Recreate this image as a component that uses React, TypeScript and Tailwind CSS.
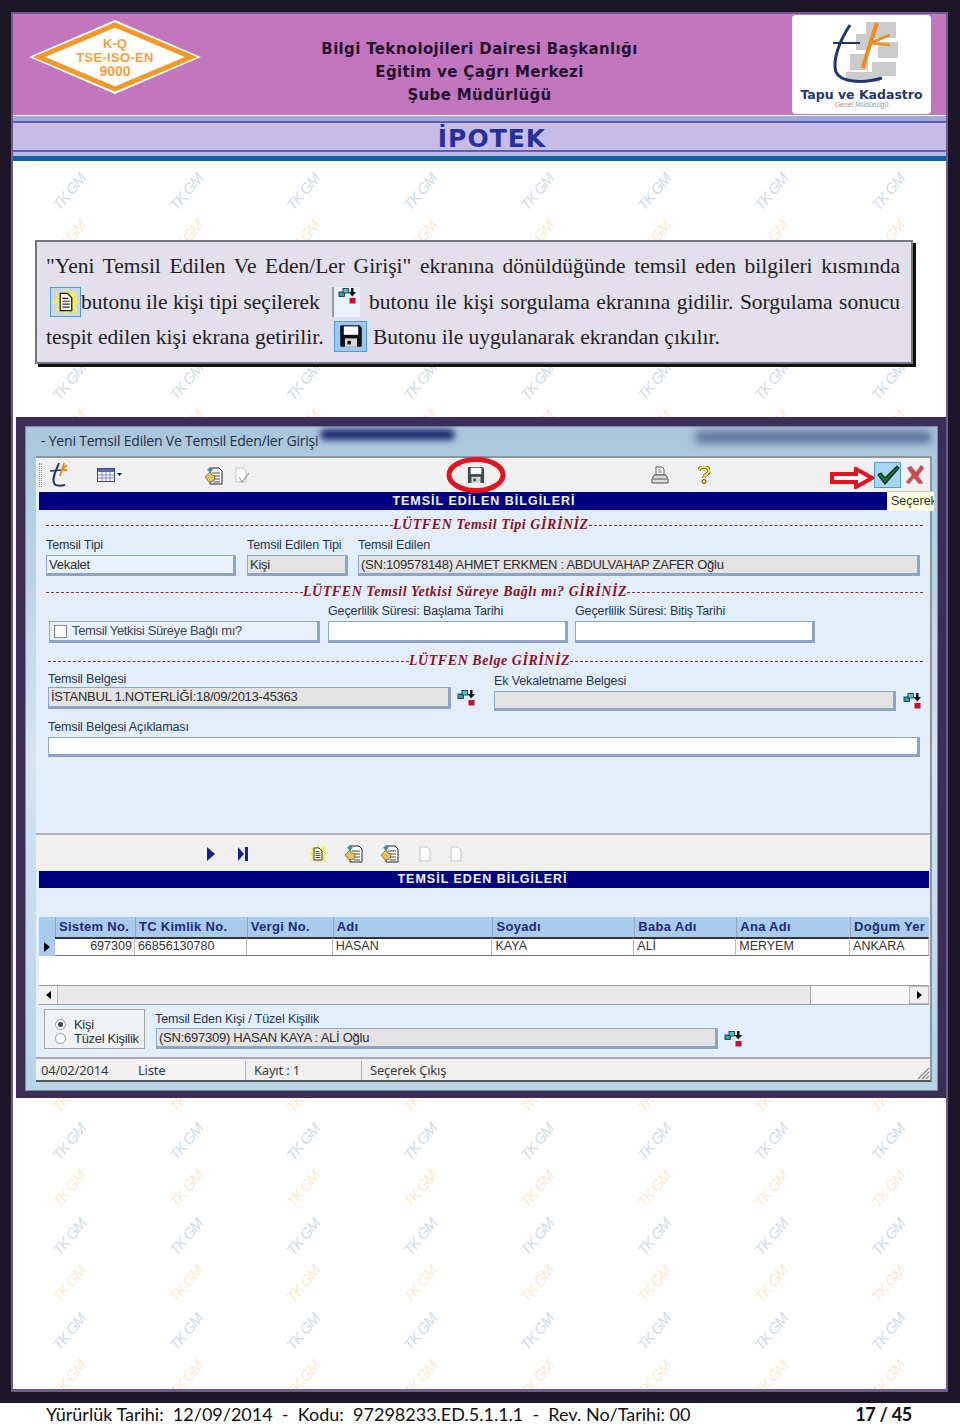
const rows = Array.from({ length: 14 }, (_, i) => i);
const cols = Array.from({ length: 8 }, (_, i) => i);

// box and screenshot cover these page rows, no point drawing marks under them
const hidden = (y: number) => y > 1385 || y < 165 || (y > 262 && y < 345) || (y > 440 && y < 1075);

function Watermarks() {
  return (
    <div className="absolute inset-0 overflow-hidden">
      {rows.map((r) =>
        cols.map((c) => (
          <div key={`${r}-${c}`}>
            {!hidden(192 + r * 95) && 192 + r * 95 < 1345 && (
              <span
                className="absolute -rotate-[50deg] font-['Liberation_Sans',sans-serif] text-[15px] leading-[16px] tracking-[-1px] italic whitespace-nowrap text-[#d0dae8]"
                style={{ left: 35 + c * 117, top: 170 + r * 95 }}
              >
                TK GM
              </span>
            )}
            {!hidden(140 + r * 95) && (
              <span
                className="absolute -rotate-[50deg] font-['Liberation_Sans',sans-serif] text-[15px] leading-[16px] tracking-[-1px] italic whitespace-nowrap text-[#fbeacf]"
                style={{ left: 35 + c * 117, top: 122 + r * 95 }}
              >
                TK GM
              </span>
            )}
          </div>
        ))
      )}
    </div>
  );
}

function DiamondLogo() {
  return (
    <svg width="174" height="76" viewBox="0 0 174 76" className="ml-[15px] mt-[5px]">
      <polygon points="87,1 173,38 87,75 1,38" fill="#fff" />
      <polygon points="87,6 163,38 87,70 11,38" fill="#fff" stroke="#f39a26" strokeWidth="5" />
      <g fill="#f5a13a" fontFamily="'Liberation Sans',sans-serif" fontWeight="700" textAnchor="middle">
        <text x="87" y="29" fontSize="13">K-Q</text>
        <text x="87" y="43" fontSize="13" letterSpacing="0.3">TSE-ISO-EN</text>
        <text x="87" y="57" fontSize="14">9000</text>
      </g>
    </svg>
  );
}

function TapuLogo() {
  return (
    <div className="ml-auto mr-[15px] mt-px flex h-[99px] w-[139px] flex-col items-center rounded-sm bg-white">
      <svg width="80" height="72" viewBox="0 0 80 72" className="mt-[5px]">
        <g fill="#cbcbcb">
          <rect x="44" y="2" width="30" height="16" />
          <rect x="34" y="14" width="14" height="16" />
          <rect x="56" y="22" width="20" height="16" />
          <rect x="28" y="34" width="18" height="16" />
          <rect x="50" y="42" width="24" height="14" />
          <rect x="24" y="52" width="34" height="10" />
        </g>
        <path d="M28 5 C18 20 10 40 14 52 C18 62 40 64 60 58" fill="none" stroke="#20366f" strokeWidth="3" />
        <path d="M11 23 L38 23" stroke="#20366f" strokeWidth="2" />
        <path d="M55 3 C50 18 44 36 41 48" fill="none" stroke="#ef8a1d" strokeWidth="4" />
        <path d="M48 23 L68 15 M48 23 L68 25" fill="none" stroke="#ef8a1d" strokeWidth="2.5" />
      </svg>
      <div className="mt-[-3px] font-['DejaVu_Sans',sans-serif] text-[12.5px] leading-[12px] font-bold whitespace-nowrap text-[#21386e]">
        Tapu ve Kadastro
      </div>
      <div className="font-['Liberation_Sans',sans-serif] text-[7px] leading-[7px] text-[#9a9a9a]">Genel Müdürlüğü</div>
    </div>
  );
}

function PickIcon({ className = "" }: { className?: string }) {
  return (
    <svg width="19" height="18" viewBox="0 0 19 18" className={className}>
      <rect x="1" y="5" width="5.500" height="4.500" fill="#2aa8a8" stroke="#123" strokeWidth="0.800" />
      <rect x="5" y="1.500" width="5.500" height="4.500" fill="#4fc3d0" stroke="#123" strokeWidth="0.800" />
      <path d="M13 1h2.500v4H18l-3.700 4.500L10.500 5H13z" fill="#111" />
      <rect x="11.500" y="11" width="6" height="5.500" fill="#c8102e" />
    </svg>
  );
}

function FloppyIcon({ className = "" }: { className?: string }) {
  return (
    <svg width="20" height="20" viewBox="0 0 20 20" className={className}>
      <path d="M2 1h15l2 2v15a1 1 0 0 1-1 1H2a1 1 0 0 1-1-1V2a1 1 0 0 1 1-1z" fill="currentColor" />
      <rect x="4" y="2" width="12" height="7" fill="#fff" />
      <rect x="5" y="12" width="10" height="7" fill="#d6d6d6" />
      <rect x="7" y="14" width="3" height="3" fill="currentColor" />
    </svg>
  );
}

function SparkDocIcon({ className = "" }: { className?: string }) {
  return (
    <svg width="18" height="18" viewBox="0 0 18 18" className={className}>
      <polygon points="9,0 11,3 16,1 15,6 18,9 15,11 17,17 11,15 9,18 7,15 2,16 3,11 0,9 3,6 2,2 7,3" fill="#f7ee4a" />
      <path d="M5 3h5l3 3v9H5z" fill="#fff" stroke="#222" strokeWidth="0.900" />
      <path d="M6.500 6.500h4M6.500 8.500h5M6.500 10.500h5M6.500 12.500h5" stroke="#222" strokeWidth="0.800" />
    </svg>
  );
}

function DocIcon({ check = false, className = "" }: { check?: boolean; className?: string }) {
  return (
    <svg width="18" height="18" viewBox="0 0 18 18" className={className}>
      <path d="M4 2h7l3 3v11H4z" fill="#fff" stroke="#c2c2c2" />
      {check && <path d="M7 11l3 5 7-9" fill="none" stroke="#a9a9a9" strokeWidth="1.300" />}
    </svg>
  );
}

function HandDocIcon({ className = "" }: { className?: string }) {
  return (
    <svg width="19" height="19" viewBox="0 0 19 19" className={className}>
      <path d="M6 2h9l3 3v13H6z" fill="#fff" stroke="#222" />
      <path d="M8 7h8M10 10h6M10 13h6M10 16h6" stroke="#444" />
      <path d="M1 11l5-5 2 3 3 1-1 5-5 1z" fill="#e8c15a" stroke="#6b5520" strokeWidth="0.700" />
      <path d="M3 4l3-3 3 3-3 2z" fill="#2c9a8f" />
    </svg>
  );
}

function TableIcon() {
  return (
    <svg width="25" height="16" viewBox="0 0 25 16">
      <rect x="0.500" y="1.500" width="17" height="13" fill="#fff" stroke="#3c4a8c" />
      <rect x="1" y="2" width="16" height="3" fill="#5668b5" />
      <path d="M1 8h16M1 11h16M5 5v9M9 5v9M13 5v9" stroke="#7c88c4" />
      <path d="M20 6h5l-2.500 3z" fill="#222" />
    </svg>
  );
}

function PrintIcon() {
  return (
    <svg width="18" height="18" viewBox="0 0 18 18">
      <path d="M5 1h6l2 2v6H5z" fill="#fff" stroke="#555" />
      <path d="M7 4h3M7 6h4" stroke="#777" />
      <path d="M3 9h12l2 4v4H1v-4z" fill="#dcdcdc" stroke="#555" />
      <path d="M2 13h14" stroke="#555" />
    </svg>
  );
}

function HelpIcon() {
  return (
    <svg width="12" height="18" viewBox="0 0 12 18">
      <path d="M1 5a5 4 0 1 1 8 3c-2 1-3 2-3 4" fill="none" stroke="#5a4a10" strokeWidth="3.500" />
      <path d="M1 5a5 4 0 1 1 8 3c-2 1-3 2-3 4" fill="none" stroke="#f0e24d" strokeWidth="2" />
      <circle cx="6" cy="15.500" r="2" fill="#f0e24d" stroke="#5a4a10" />
    </svg>
  );
}

function DashTitle({ children, left, className = "" }: { children: string; left: string; className?: string }) {
  return (
    <div className={`flex h-[12px] items-center ${className}`}>
      <div className={`${left} border-t border-dashed border-[#8a2a3c]`} />
      <span className="font-['Liberation_Serif',serif] text-[14px] leading-[12px] font-bold tracking-[0.55px] whitespace-nowrap text-[#8e1023] italic">
        {children}
      </span>
      <div className="min-w-0 flex-1 border-t border-dashed border-[#8a2a3c]" />
    </div>
  );
}

function Label({ children, className = "" }: { children: string; className?: string }) {
  return (
    <div className={`font-['Liberation_Sans',sans-serif] text-[12.5px] leading-[14px] tracking-[-0.12px] whitespace-nowrap text-[#26344f] ${className}`}>
      {children}
    </div>
  );
}

function Field({ children, className = "" }: { children?: React.ReactNode; className?: string }) {
  return (
    <div
      className={`flex items-center overflow-hidden border-t border-r-[3px] border-b-[3px] border-l border-t-[#88a9d0] border-r-[#8ea4c4] border-b-[#8ea4c4] border-l-[#88a9d0] pl-[2px] font-['Liberation_Sans',sans-serif] text-[13px] tracking-[-0.25px] whitespace-nowrap text-[#2c2c2c] ${className}`}
    >
      {children}
    </div>
  );
}

const gridCols = [
  { w: "w-[80px]", head: "Sistem No.", cell: "697309", right: true },
  { w: "w-[112px]", head: "TC Kimlik No.", cell: "66856130780" },
  { w: "w-[86px]", head: "Vergi No.", cell: "" },
  { w: "w-[160px]", head: "Adı", cell: "HASAN" },
  { w: "w-[142px]", head: "Soyadı", cell: "KAYA" },
  { w: "w-[102px]", head: "Baba Adı", cell: "ALİ" },
  { w: "w-[114px]", head: "Ana Adı", cell: "MERYEM" },
  { w: "w-[79px]", head: "Doğum Yer", cell: "ANKARA" },
];

function ScreenWindow() {
  return (
    <div className="relative z-10 mt-[53px] ml-[3px] h-[681px] bg-[#3b2d57] pt-[9px] pl-[9px]">
      <div className="h-[665px] w-[913px] border border-[#7d8c9c] bg-gradient-to-b from-[#a9c6dc] via-[#d4e4f1] to-[#b8d3e8] pl-[10px]">
        {/* title bar */}
        <div className="relative h-[29px] pt-[5px] pl-[5px] font-['Open_Sans',sans-serif] text-[14px] leading-[18px] tracking-[-0.2px] text-[#1e2c3c]">
          - Yeni Temsil Edilen Ve Temsil Eden/ler Girişi
          <div className="absolute top-[2px] left-[284px] h-[11px] w-[135px] rounded-full bg-[#1b2a6b] blur-[3px]" />
          <div className="absolute top-[4px] left-[660px] h-[12px] w-[235px] bg-[#5b6f9d] blur-[4px]" />
        </div>
        {/* client */}
        <div className="relative w-[896px] border-t-2 border-r-2 border-b-2 border-[#8a959f] border-b-[#555] bg-[#e2effb]">
          {/* top toolbar */}
          <div className="flex h-[34px] items-center bg-[#f0f0f0]">
            <div className="ml-[3px] h-[24px] w-[3px] border-x border-dotted border-[#999]" />
            <svg width="18" height="26" viewBox="0 0 18 26" className="ml-[8px]">
              <path d="M9 1C6 9 2 15 4 21c1 3 6 3 11 2" fill="none" stroke="#20366f" strokeWidth="2" />
              <path d="M0 9l12-1" stroke="#20366f" strokeWidth="1.500" />
              <path d="M14 1c-1 5-3 9-4 13M11 8l6-5M11 8l6 0" fill="none" stroke="#ef8a1d" strokeWidth="1.800" />
            </svg>
            <div className="ml-[29px] w-[25px]"><TableIcon /></div>
            <HandDocIcon className="ml-[82px]" />
            <DocIcon check className="ml-[9px]" />
            <FloppyIcon className="ml-[217px] h-[18px] w-[18px] text-[#3f4a4f]" />
            <div className="ml-[166px]"><PrintIcon /></div>
            <div className="ml-[29px]"><HelpIcon /></div>
            <div className="ml-[164px] flex h-[26px] w-[27px] items-center justify-center border border-[#4d9ad8] bg-[#a9d5f1]">
              <svg width="24" height="20" viewBox="0 0 24 20">
                <path d="M2 10l3-2 4 5L21 1l2 2L9 19z" fill="#0f7a22" stroke="#12233a" strokeWidth="1.200" />
              </svg>
            </div>
            <svg width="21" height="22" viewBox="0 0 21 22" className="ml-[4px]">
              <path d="M2 4l4-2 5 6 5-7 3 3-6 8 5 7-4 1-5-6-5 6-3-2 6-7z" fill="#d9464a" stroke="#999" strokeWidth="0.700" />
            </svg>
          </div>
          {/* overlay marks */}
          <svg width="62" height="38" viewBox="0 0 62 38" className="absolute top-[-2px] left-[409px]">
            <ellipse cx="31" cy="19" rx="27" ry="15.500" fill="none" stroke="#e5121f" strokeWidth="5" />
          </svg>
          <svg width="44" height="22" viewBox="0 0 44 22" className="absolute top-[9px] left-[794px]">
            <path d="M2 7h24V2l16 9-16 9v-5H2z" fill="#fff" stroke="#e5121f" strokeWidth="4" />
          </svg>
          <div className="absolute top-[33px] left-[851px] z-20 h-[20px] w-[48px] overflow-hidden border-t border-r border-[#c9c9c9] bg-[#ffffe1] pl-[4px] font-['Liberation_Sans',sans-serif] text-[12.5px] leading-[19px] whitespace-nowrap text-[#333]">
            Seçerek
          </div>

          {/* navy bar */}
          <div className="mr-[1px] ml-[3px] h-[18px] bg-[#000080] text-center font-['Liberation_Sans',sans-serif] text-[12.5px] leading-[18px] font-bold tracking-[1px] text-[#f2f4ff]">
            TEMSİL EDİLEN BİLGİLERİ
          </div>

          {/* form */}
          <div className="mr-[1px] ml-[3px] h-[323px] overflow-hidden pt-[9px]">
            <DashTitle left="w-[347px]" className="ml-[7px] w-[877px]">LÜTFEN Temsil Tipi GİRİNİZ</DashTitle>
            <div className="mt-[7px] flex">
              <div className="ml-[7px] w-[190px]">
                <Label className="h-[17px]">Temsil Tipi</Label>
                <Field className="h-[21px] bg-[#e8f1f8]">Vekalet</Field>
              </div>
              <div className="ml-[11px] w-[101px]">
                <Label className="h-[17px]">Temsil Edilen Tipi</Label>
                <Field className="h-[21px] bg-[#e3e3e3]">Kişi</Field>
              </div>
              <div className="ml-[10px] w-[562px]">
                <Label className="h-[17px]">Temsil Edilen</Label>
                <Field className="h-[21px] bg-[#e3e3e3]">(SN:109578148) AHMET ERKMEN : ABDULVAHAP ZAFER Oğlu</Field>
              </div>
            </div>
            <DashTitle left="w-[257px]" className="mt-[10px] ml-[7px] w-[877px]">LÜTFEN Temsil Yetkisi Süreye Bağlı mı? GİRİNİZ</DashTitle>
            <div className="mt-[6px] flex items-end">
              <Field className="ml-[10px] h-[22px] w-[271px] bg-[#e8f1f8]">
                <span className="ml-[2px] h-[13px] w-[13px] border border-[#8a8a8a] bg-white" />
                <span className="ml-[5px] tracking-[-0.35px] text-[#3b4658]">Temsil Yetkisi Süreye Bağlı mı?</span>
              </Field>
              <div className="ml-[8px] w-[240px]">
                <Label className="h-[17px]">Geçerlilik Süresi: Başlama Tarihi</Label>
                <Field className="h-[22px] bg-white" />
              </div>
              <div className="ml-[7px] w-[240px]">
                <Label className="h-[17px]">Geçerlilik Süresi: Bitiş Tarihi</Label>
                <Field className="h-[22px] bg-white" />
              </div>
            </div>
            <DashTitle left="w-[361px]" className="mt-[12px] ml-[9px] w-[875px]">LÜTFEN Belge GİRİNİZ</DashTitle>
            <div className="mt-[5px] flex">
              <div className="ml-[9px] w-[403px]">
                <Label className="h-[15px]">Temsil Belgesi</Label>
                <Field className="h-[22px] bg-[#e3e3e3]">İSTANBUL 1.NOTERLİĞİ:18/09/2013-45363</Field>
              </div>
              <PickIcon className="mt-[17px] ml-[6px]" />
              <div className="ml-[18px] w-[402px]">
                <Label className="h-[19px] pt-[2px]">Ek Vekaletname Belgesi</Label>
                <Field className="h-[20px] bg-[#e3e3e3]" />
              </div>
              <PickIcon className="mt-[20px] ml-[7px]" />
            </div>
            <Label className="mt-[9px] ml-[9px] h-[17px]">Temsil Belgesi Açıklaması</Label>
            <Field className="ml-[9px] h-[20px] w-[872px] bg-white" />
          </div>

          {/* lower toolbar */}
          <div className="flex h-[38px] items-center border-t-2 border-[#b0b0b0] bg-[#f0f0f0] pt-[1px]">
            <svg width="10" height="14" viewBox="0 0 10 14" className="ml-[170px]"><path d="M1 0l8 7-8 7z" fill="#14238a" /></svg>
            <svg width="10" height="14" viewBox="0 0 10 14" className="ml-[22px]"><path d="M0 0l6 7-6 7zM7 0h3v14H7z" fill="#14238a" /></svg>
            <SparkDocIcon className="ml-[61px]" />
            <HandDocIcon className="ml-[17px]" />
            <HandDocIcon className="ml-[17px]" />
            <DocIcon className="ml-[17px]" />
            <DocIcon className="ml-[13px]" />
          </div>
          <div className="mr-[1px] ml-[3px] h-[17px] bg-[#000080] pr-[3px] text-center font-['Liberation_Sans',sans-serif] text-[12.5px] leading-[17px] font-bold tracking-[1px] text-[#f2f4ff]">
            TEMSİL EDEN BİLGİLERİ
          </div>

          {/* grid */}
          <div className="h-[29px]" />
          <div className="mr-[1px] ml-[3px] flex h-[20px] bg-[#a9cbee]">
            <div className="w-[16px]" />
            {gridCols.map((c) => (
              <div key={c.head} className={`${c.w} overflow-hidden border-l border-[#8fa7c2] pl-[3px] font-['Liberation_Sans',sans-serif] text-[13px] leading-[20px] font-bold tracking-[0.3px] whitespace-nowrap text-[#1c2a7a]`}>
                {c.head}
              </div>
            ))}
          </div>
          <div className="mr-[1px] ml-[3px] flex h-[19px] bg-[#a9cbee]">
            <div className="flex w-[16px] items-center justify-center">
              <div className="h-0 w-0 border-y-[5px] border-l-[6px] border-y-transparent border-l-black" />
            </div>
            {gridCols.map((c) => (
              <div
                key={c.head}
                className={`${c.w} overflow-hidden border-t-2 border-r border-b border-t-[#333] border-r-[#bbb] border-b-[#777] bg-white pr-[2px] pl-[3px] font-['Liberation_Sans',sans-serif] text-[12.5px] leading-[15px] whitespace-nowrap text-[#333] ${c.right ? "text-right" : ""}`}
              >
                {c.cell}
              </div>
            ))}
          </div>
          <div className="mr-[1px] ml-[3px] h-[29px] bg-white" />

          {/* scrollbar */}
          <div className="mr-[1px] ml-[3px] flex h-[20px] items-stretch border-y border-[#a0a0a0] bg-[#f7f7f7]">
            <div className="flex w-[19px] items-center justify-center border-r border-[#bbb] bg-[#f0f0f0]">
              <div className="h-0 w-0 border-y-[4px] border-r-[5px] border-y-transparent border-r-black" />
            </div>
            <div className="w-[753px] border-r border-[#a8a8a8] bg-[#e9e9e9]" />
            <div className="flex-1" />
            <div className="flex w-[20px] items-center justify-center border border-[#bbb] bg-[#f0f0f0]">
              <div className="h-0 w-0 border-y-[4px] border-l-[5px] border-y-transparent border-l-black" />
            </div>
          </div>

          {/* person */}
          <div className="mr-[1px] ml-[3px] flex h-[52px] pt-[4px]">
            <div className="ml-[5px] h-[40px] w-[101px] border border-[#a3a3a3] bg-[#eef2f5] pt-[9px] pl-[10px] font-['Liberation_Sans',sans-serif] text-[13px] leading-[11px] tracking-[-0.3px] text-[#333]">
              <div className="flex items-center">
                <span className="flex h-[11px] w-[11px] items-center justify-center rounded-full border border-[#999] bg-white">
                  <span className="h-[5px] w-[5px] rounded-full bg-[#444]" />
                </span>
                <span className="ml-[8px]">Kişi</span>
              </div>
              <div className="mt-[3px] flex items-center">
                <span className="h-[11px] w-[11px] rounded-full border border-[#999] bg-white" />
                <span className="ml-[8px]">Tüzel Kişilik</span>
              </div>
            </div>
            <div className="mt-[3px] ml-[10px] w-[563px]">
              <Label className="h-[16px]">Temsil Eden Kişi / Tüzel Kişilik</Label>
              <Field className="ml-px h-[21px] bg-[#e3e3e3]">(SN:697309) HASAN KAYA : ALİ Oğlu</Field>
            </div>
            <PickIcon className="mt-[21px] ml-[6px]" />
          </div>

          {/* status */}
          <div className="relative flex h-[23px] items-stretch overflow-hidden border-t-2 border-[#a8a8a8] bg-[#f0f0f0] pt-[2px] pl-[3px] font-['Noto_Sans',sans-serif] text-[13px] leading-[19px] tracking-[-0.2px] text-[#3a3a3a]">
            <div className="w-[97px] pl-[2px]">04/02/2014</div>
            <div className="w-[109px] bg-[#f5f5f5] pl-[2px]">Liste</div>
            <div className="w-[116px] border-l border-[#aaa] pl-[8px]">Kayıt : 1</div>
            <div className="border-l border-[#aaa] pl-[8px]">Seçerek Çıkış</div>
            <svg width="14" height="14" viewBox="0 0 14 14" className="absolute right-0 bottom-0">
              <path d="M13 2L2 13M13 6l-7 7M13 10l-3 3" stroke="#8a8a8a" strokeWidth="1.200" />
            </svg>
          </div>
        </div>
      </div>
    </div>
  );
}

export default function App() {
  return (
    <div className="h-[1426px] w-[960px] bg-white">
      {/* dark page frame */}
      <div className="h-[1403px] bg-[#1d1528] pt-[12px] pr-[12px] pb-[11px] pl-[11px]">
        <div className="relative h-[1380px] w-[937px] border-2 border-b-[3px] border-[#6d5a94] bg-white">
          <Watermarks />

          {/* header */}
          <div className="relative z-10 flex h-[101px] bg-[#c176be]">
            <div className="w-[205px]"><DiamondLogo /></div>
            <div className="mt-[24px] w-[523px] text-center font-['DejaVu_Sans',sans-serif] text-[15px] leading-[23px] font-bold tracking-[0.35px] text-[#25122f]">
              <div>Bilgi Teknolojileri Dairesi Başkanlığı</div>
              <div>Eğitim ve Çağrı Merkezi</div>
              <div>Şube Müdürlüğü</div>
            </div>
            <TapuLogo />
          </div>
          <div className="relative z-10 h-px bg-white" />
          <div className="relative z-10 h-[5px] bg-[#9fa9d8]" />
          <div className="relative z-10 h-[2px] bg-[#5b5fb8]" />
          <div className="relative z-10 h-[27px] bg-[#c5bde6] pl-[25px] text-center font-['DejaVu_Sans',sans-serif] text-[25px] leading-[32px] font-bold tracking-[1px] text-[#26309a]">
            İPOTEK
          </div>
          <div className="relative z-10 h-[2px] bg-[#5b5fb8]" />
          <div className="relative z-10 h-[4px] bg-[#b9b6e2]" />
          <div className="relative z-10 h-[5px] bg-[#0b66a8]" />

          {/* explanation box */}
          <div className="relative z-10 mt-[79px] ml-[22px] h-[124px] w-[878px] border-2 border-[#77757c] bg-[#e3dfeb] py-[7px] pr-[11px] pl-[9px] font-['Liberation_Serif',serif] text-[21.5px] leading-[35.5px] whitespace-nowrap text-[#222] shadow-[3px_3px_0_#111]">
            <div className="h-[35.5px] text-justify [text-align-last:justify]">
              "Yeni Temsil Edilen Ve Eden/Ler Girişi" ekranına dönüldüğünde temsil eden bilgileri kısmında
            </div>
            <div className="flex h-[35.5px] items-center">
              <span className="ml-[4px] flex h-[30px] w-[31px] shrink-0 items-center justify-center border border-[#4a9be0] bg-[#c9d6e4]">
                <SparkDocIcon className="h-[26px] w-[26px]" />
              </span>
              <span className="w-[241px] shrink-0">butonu ile kişi tipi seçilerek</span>
              <span className="ml-[10px] flex h-[30px] w-[28px] shrink-0 items-start justify-center border-l-2 border-[#999] bg-[#eaf2fa]">
                <PickIcon />
              </span>
              <span className="ml-[9px] min-w-0 flex-1 text-justify [text-align-last:justify]">
                butonu ile kişi sorgulama ekranına gidilir. Sorgulama sonucu
              </span>
            </div>
            <div className="flex h-[35.5px] items-center">
              <span className="w-[279px] shrink-0">tespit edilen kişi ekrana getirilir.</span>
              <span className="mb-[3px] ml-[9px] flex h-[31px] w-[33px] shrink-0 items-center justify-center border border-[#4a9be0] bg-[#9cc8f0] text-[#111]">
                <FloppyIcon className="h-[24px] w-[24px]" />
              </span>
              <span className="ml-[6px]">Butonu ile uygulanarak ekrandan çıkılır.</span>
            </div>
          </div>

          <ScreenWindow />
        </div>
      </div>

      {/* footer */}
      <div className="flex h-[23px] pr-[48px] pl-[46px] font-['Lato',sans-serif] text-[18px] leading-[22px] whitespace-pre text-[#111]">
        <div>Yürürlük Tarihi:  12/09/2014  -  Kodu:  97298233.ED.5.1.1.1  -  Rev. No/Tarihi: 00</div>
        <div className="ml-auto font-bold tracking-[-0.3px]">17 / 45</div>
      </div>
    </div>
  );
}
